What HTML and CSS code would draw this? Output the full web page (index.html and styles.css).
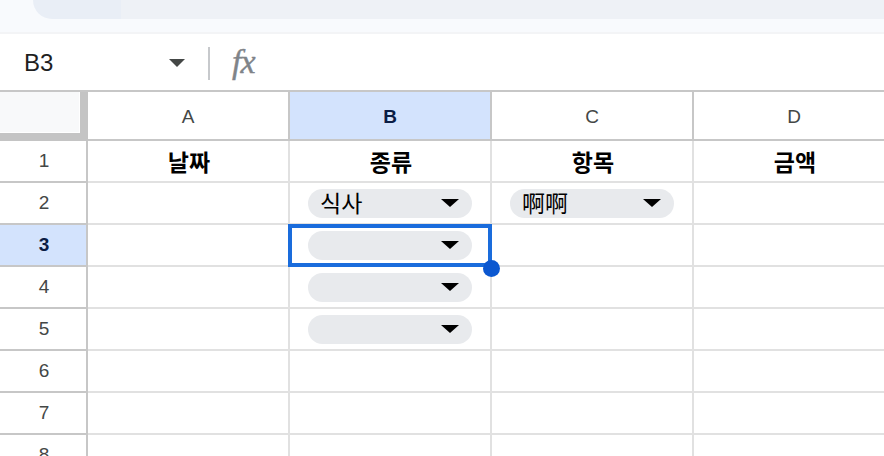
FILE: index.html
```html
<!DOCTYPE html>
<html lang="ko">
<head>
<meta charset="utf-8">
<title>Sheet</title>
<link rel="stylesheet" href="styles.css">
</head>
<body>
<div class="top">
  <div class="top-left"></div>
  <div class="top-pill"><div class="pill-a"></div><div class="pill-b"></div></div>
</div>
<div class="top-band"></div>
<div class="fbar">
  <div class="namebox"><span class="ref">B3</span><span class="caret"></span></div>
  <div class="sep"></div>
  <div class="fx">fx</div>
</div>
<div class="grid">
  <div class="corner"></div>
  <div class="ch">A</div>
  <div class="ch sel">B</div>
  <div class="ch">C</div>
  <div class="ch">D</div>

  <div class="rh">1</div>
  <div class="c hd">날짜</div>
  <div class="c hd">종류</div>
  <div class="c hd">항목</div>
  <div class="c hd">금액</div>

  <div class="rh">2</div>
  <div class="c"></div>
  <div class="c"><div class="chip"><span class="chip-t">식사</span><span class="tri"></span></div></div>
  <div class="c"><div class="chip"><span class="chip-t">啊啊</span><span class="tri"></span></div></div>
  <div class="c"></div>

  <div class="rh rsel">3</div>
  <div class="c"></div>
  <div class="c active"><div class="chip"><span class="chip-t"></span><span class="tri"></span></div><div class="selbox"></div><div class="handle"></div></div>
  <div class="c"></div>
  <div class="c"></div>

  <div class="rh">4</div>
  <div class="c"></div>
  <div class="c"><div class="chip"><span class="chip-t"></span><span class="tri"></span></div></div>
  <div class="c"></div>
  <div class="c"></div>

  <div class="rh">5</div>
  <div class="c"></div>
  <div class="c"><div class="chip"><span class="chip-t"></span><span class="tri"></span></div></div>
  <div class="c"></div>
  <div class="c"></div>

  <div class="rh">6</div>
  <div class="c"></div><div class="c"></div><div class="c"></div><div class="c"></div>

  <div class="rh">7</div>
  <div class="c"></div><div class="c"></div><div class="c"></div><div class="c"></div>

  <div class="rh">8</div>
  <div class="c"></div><div class="c"></div><div class="c"></div><div class="c"></div>
</div>
</body>
</html>
```
FILE: styles.css
```css
* { box-sizing: border-box; }
html, body { margin: 0; padding: 0; }
body {
  width: 884px;
  height: 456px;
  overflow: hidden;
  background: #ffffff;
  font-family: "Liberation Sans", Arial, "Noto Sans CJK KR", sans-serif;
}

.top {
  height: 19px;
  display: flex;
  background: #f8fafd;
}
.top-left { width: 33px; }
.top-pill {
  flex: 1;
  display: flex;
  border-bottom-left-radius: 22px;
  overflow: hidden;
}
.pill-a { width: 88px; background: #e9eef6; }
.pill-b { flex: 1; background: #eef1f6; }
.top-band {
  height: 15px;
  background: #f8fafd;
  border-bottom: 2px solid #f3f4f6;
}

.fbar {
  height: 58px;
  display: flex;
  align-items: center;
  border-bottom: 2px solid #c7c7c7;
  padding-top: 2px;
}
.namebox {
  width: 208px;
  display: flex;
  align-items: center;
  padding-left: 24px;
  padding-right: 23px;
}
.ref {
  flex: 1;
  font-size: 24px;
  color: #1f1f1f;
  line-height: 1;
}
.caret {
  width: 0;
  height: 0;
  border-left: 8px solid transparent;
  border-right: 8px solid transparent;
  border-top: 8px solid #444746;
}
.sep {
  width: 2px;
  height: 33px;
  background: #c7c9cc;
}
.fx {
  margin-left: 22px;
  font-family: "Liberation Serif", "Times New Roman", serif;
  font-style: italic;
  font-size: 34px;
  color: #7f8489;
  letter-spacing: -1px;
  line-height: 1;
  margin-top: -2px;
  -webkit-text-stroke: 0.4px #7f8489;
}

.grid {
  display: grid;
  grid-template-columns: 88px 202px 202px 202px 202px;
  grid-template-rows: 49px repeat(8, 42px);
  width: 896px;
}
.corner {
  background: #f8f9fa;
  border-right: 8px solid #c4c4c4;
  border-bottom: 8px solid #c4c4c4;
  box-shadow: inset -1px -1px 0 #ffffff;
}
.ch {
  display: flex;
  align-items: center;
  justify-content: center;
  border-right: 2px solid #c7c7c7;
  border-bottom: 2px solid #c7c7c7;
  font-size: 19px;
  color: #444746;
  padding-top: 2px;
}
.ch.sel {
  background: #d3e3fd;
  color: #0b1d45;
  font-weight: bold;
}
.rh {
  display: flex;
  align-items: center;
  justify-content: center;
  border-right: 2px solid #c7c7c7;
  border-bottom: 2px solid #c7c7c7;
  font-size: 19px;
  color: #444746;
  padding-left: 2px;
}
.rh.rsel {
  background: #d3e3fd;
  color: #0b1d45;
  font-weight: bold;
}
.c {
  display: flex;
  align-items: center;
  border-right: 2px solid #e1e1e1;
  border-bottom: 2px solid #e1e1e1;
  font-family: "Noto Sans CJK KR", "Liberation Sans", sans-serif;
  font-size: 23px;
  color: #000000;
}
.c.hd {
  justify-content: center;
  font-weight: bold;
  padding-left: 2px;
}
.chip {
  margin-left: 18px;
  width: 164px;
  height: 29px;
  border-radius: 15px;
  background: #e8eaed;
  display: flex;
  align-items: center;
  padding-left: 12px;
  padding-right: 13px;
}
.chip-t {
  flex: 1;
  line-height: 1;
  margin-top: -1px;
}
.tri {
  width: 0;
  height: 0;
  border-left: 9px solid transparent;
  border-right: 9px solid transparent;
  border-top: 8px solid #000000;
}
.active { position: relative; }
.selbox {
  position: absolute;
  left: -2px;
  right: -2px;
  top: -1px;
  bottom: -2px;
  border: 4px solid #1a6cdc;
}
.handle {
  position: absolute;
  right: -10px;
  bottom: -12px;
  width: 17px;
  height: 17px;
  border-radius: 50%;
  background: #0b57d0;
}
```
